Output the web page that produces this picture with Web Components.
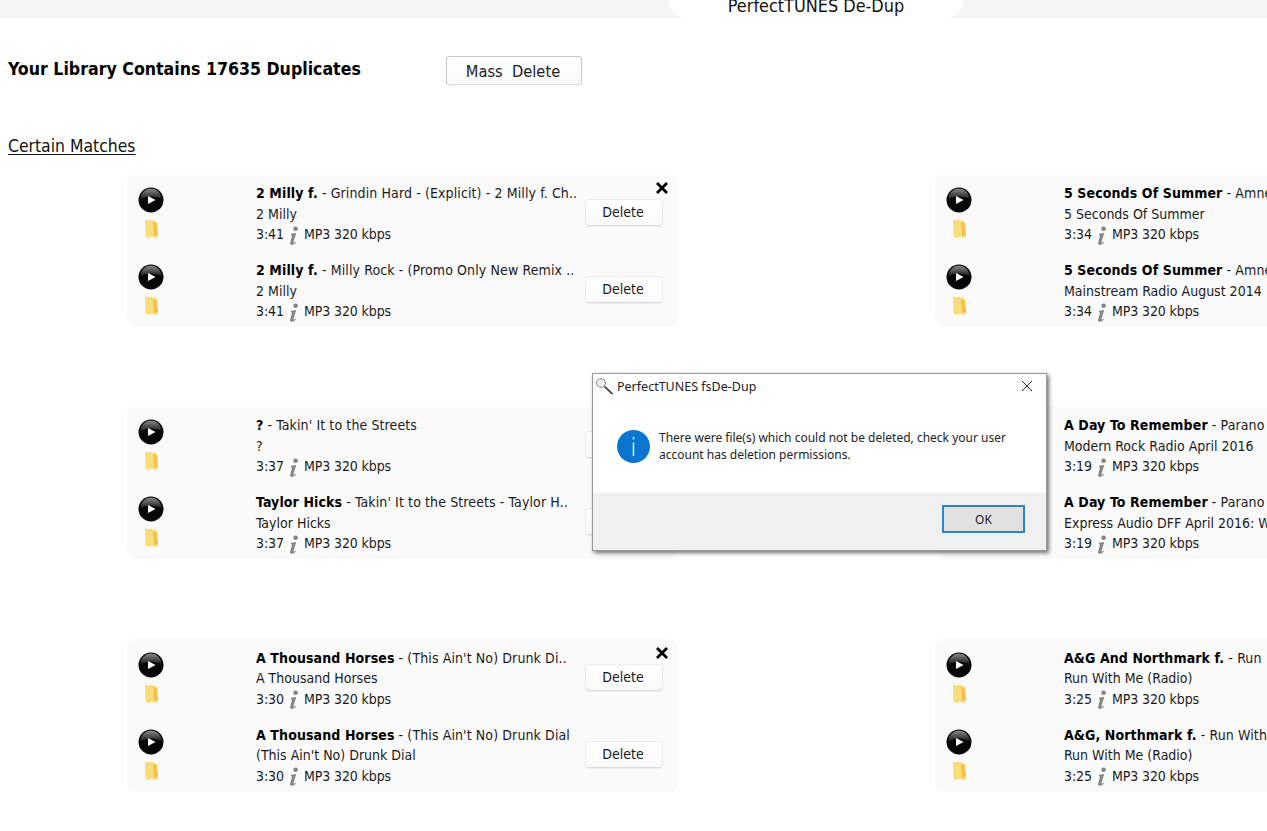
<!DOCTYPE html>
<html>
<head>
<meta charset="utf-8">
<title>PerfectTUNES De-Dup</title>
<style>
  html, body {
    margin: 0;
    height: 100%;
    overflow: hidden;
    background: #fff;
    color: #111;
    font-family: "DejaVu Sans Condensed", "DejaVu Sans", sans-serif;
    font-stretch: condensed;
  }
</style>
</head>
<body>

<dd-tabbar>PerfectTUNES De-Dup</dd-tabbar>

<dd-summary>
  <span slot="title">Your Library Contains 17635 Duplicates</span>
  <dd-button slot="action" wide>Mass&nbsp; Delete</dd-button>
</dd-summary>

<dd-section heading="Certain Matches">
  <dd-match closable>
    <dd-track><b>2 Milly f.</b> - Grindin Hard - (Explicit) - 2 Milly f. Ch..<span slot="album">2 Milly</span><span slot="time">3:41</span></dd-track>
    <dd-track><b>2 Milly f.</b> - Milly Rock - (Promo Only New Remix ..<span slot="album">2 Milly</span><span slot="time">3:41</span></dd-track>
  </dd-match>
  <dd-match closable>
    <dd-track><b>5 Seconds Of Summer</b> - Amne<span slot="album">5 Seconds Of Summer</span><span slot="time">3:34</span></dd-track>
    <dd-track><b>5 Seconds Of Summer</b> - Amne<span slot="album">Mainstream Radio August 2014</span><span slot="time">3:34</span></dd-track>
  </dd-match>
  <dd-match closable>
    <dd-track><b>?</b> - Takin' It to the Streets<span slot="album">?</span><span slot="time">3:37</span></dd-track>
    <dd-track><b>Taylor Hicks</b> - Takin' It to the Streets - Taylor H..<span slot="album">Taylor Hicks</span><span slot="time">3:37</span></dd-track>
  </dd-match>
  <dd-match closable>
    <dd-track><b>A Day To Remember</b> - Parano<span slot="album">Modern Rock Radio April 2016</span><span slot="time">3:19</span></dd-track>
    <dd-track><b>A Day To Remember</b> - Parano<span slot="album">Express Audio DFF April 2016: W</span><span slot="time">3:19</span></dd-track>
  </dd-match>
  <dd-match closable>
    <dd-track><b>A Thousand Horses</b> - (This Ain't No) Drunk Di..<span slot="album">A Thousand Horses</span><span slot="time">3:30</span></dd-track>
    <dd-track><b>A Thousand Horses</b> - (This Ain't No) Drunk Dial<span slot="album">(This Ain't No) Drunk Dial</span><span slot="time">3:30</span></dd-track>
  </dd-match>
  <dd-match closable>
    <dd-track><b>A&amp;G And Northmark f.</b> - Run<span slot="album">Run With Me (Radio)</span><span slot="time">3:25</span></dd-track>
    <dd-track><b>A&amp;G, Northmark f.</b> - Run With<span slot="album">Run With Me (Radio)</span><span slot="time">3:25</span></dd-track>
  </dd-match>
</dd-section>

<dd-dialog heading="PerfectTUNES fsDe-Dup">There were file(s) which could not be deleted, check your user account has deletion permissions.</dd-dialog>

<script>
class DdTabbar extends HTMLElement {
  constructor() {
    super();
    const shadowRoot = this.attachShadow({mode: 'open'});
    shadowRoot.innerHTML = `
      <style>
        :host {
          display: flex;
          justify-content: flex-end;
          height: 18px;
          padding-right: 304px;
          background: #f5f5f5;
          overflow: hidden;
        }
        .tab {
          width: 294px;
          height: 18px;
          box-sizing: border-box;
          background: #fff;
          border-radius: 0 0 18px 18px;
          text-align: center;
          font-size: 17.9px;
          line-height: 12px;
        }
      </style>
      <div class="tab"><slot></slot></div>
    `;
  }
}
customElements.define('dd-tabbar', DdTabbar);

class DdButton extends HTMLElement {
  constructor() {
    super();
    const shadowRoot = this.attachShadow({mode: 'open'});
    shadowRoot.innerHTML = `
      <style>
        :host {
          display: flex;
          align-items: center;
          justify-content: center;
          box-sizing: border-box;
          width: 78px;
          height: 27px;
          padding-right: 2px;
          border: 1px solid #ececec;
          border-bottom-color: #dcdcdc;
          border-radius: 4px;
          background: linear-gradient(#fff, #fafafa);
          box-shadow: 0 1px 1px rgba(0, 0, 0, .05);
          font-size: 14px;
          color: #1a1a1a;
          white-space: nowrap;
        }
        :host([wide]) {
          width: 136px;
          height: 29px;
          border-color: #c8c8c8;
          border-bottom-color: #dedede;
          font-size: 16.3px;
          padding-top: 2px;
        }
      </style>
      <slot></slot>
    `;
  }
}
customElements.define('dd-button', DdButton);

class DdSummary extends HTMLElement {
  constructor() {
    super();
    const shadowRoot = this.attachShadow({mode: 'open'});
    shadowRoot.innerHTML = `
      <style>
        :host {
          display: grid;
          grid-template-columns: 438px auto;
          justify-content: start;
          align-items: start;
          padding: 38px 0 0 8px;
        }
        .title {
          font-size: 17.6px;
          font-weight: 700;
          line-height: 26px;
          color: #000;
          white-space: nowrap;
        }
      </style>
      <div class="title"><slot name="title"></slot></div>
      <slot name="action"></slot>
    `;
  }
}
customElements.define('dd-summary', DdSummary);

class DdSection extends HTMLElement {
  constructor() {
    super();
    const shadowRoot = this.attachShadow({mode: 'open'});
    shadowRoot.innerHTML = `
      <style>
        :host { display: block; }
        h2 {
          margin: 49px 0 16px 8px;
          font-size: 17.4px;
          font-weight: 400;
          line-height: 24px;
          text-decoration: underline;
          text-underline-offset: 2px;
        }
        .grid {
          display: grid;
          grid-template-columns: 551px 551px;
          column-gap: 257px;
          row-gap: 79.3px;
          padding-left: 127px;
        }
      </style>
      <h2></h2>
      <div class="grid"><slot></slot></div>
    `;
    shadowRoot.querySelector('h2').textContent = this.getAttribute('heading');
  }
}
customElements.define('dd-section', DdSection);

class DdMatch extends HTMLElement {
  constructor() {
    super();
    const shadowRoot = this.attachShadow({mode: 'open'});
    shadowRoot.innerHTML = `
      <style>
        :host {
          display: block;
          position: relative;
          height: 153px;
          background: #fafafa;
          border-radius: 9px;
        }
        svg {
          position: absolute;
          right: 10px;
          top: 8px;
          width: 12px;
          height: 12px;
        }
      </style>
      <slot></slot>
      <svg viewBox="0 0 12 12"><path d="M1 1 L11 11 M11 1 L1 11" stroke="#000" stroke-width="2.8" fill="none"/></svg>
    `;
  }
}
customElements.define('dd-match', DdMatch);

class DdTrack extends HTMLElement {
  constructor() {
    super();
    const shadowRoot = this.attachShadow({mode: 'open'});
    shadowRoot.innerHTML = `
      <style>
        :host {
          display: grid;
          grid-template-columns: 129px 329px 78px;
          height: 77px;
          box-sizing: border-box;
          font-size: 14px;
          line-height: 20.5px;
          color: #1a1a1a;
        }
        .icons {
          display: flex;
          flex-direction: column;
          align-items: flex-start;
          gap: 6px;
          padding: 13px 0 0 11px;
        }
        .folder { margin-left: 6px; filter: blur(.5px); }
        .text {
          padding-top: 9px;
          white-space: nowrap;
        }
        .text div { height: 20.5px; }
        .text .line { letter-spacing: .11px; }
        .meta {
          display: flex;
          align-items: center;
          letter-spacing: -.1px;
        }
        .meta svg { margin: 3px 5px 0 4px; }
        .action { padding-top: 25px; }
        ::slotted(b) { color: #000; }
      </style>
      <div class="icons">
        <svg width="26" height="26" viewBox="0 0 26 26">
          <defs>
            <linearGradient id="gloss" x1="0" y1="0" x2="0" y2="1">
              <stop offset="0" stop-color="#8a8a8a"/>
              <stop offset="1" stop-color="#1c1c1c"/>
            </linearGradient>
          </defs>
          <circle cx="13" cy="13" r="12.5" fill="#060606"/>
          <path d="M2.5 12 A10.5 10.5 0 0 1 23.5 12 C17 8.5 9 8.5 2.5 12 Z" fill="url(#gloss)"/>
          <path d="M10 9 L17.5 13 L10 17 Z" fill="#fff"/>
        </svg>
        <svg class="folder" width="15" height="20" viewBox="0 0 15 20">
          <path d="M1 1 L8 1 L13 3 L14 16 L13.5 19 L8 18 L3 19 L1.5 17 Z" fill="#f9dc7c"/>
          <path d="M9 3 L13 4 L14 16 L10 17 Z" fill="#f2c349"/>
        </svg>
      </div>
      <div class="text">
        <div class="line"><slot></slot></div>
        <div><slot name="album"></slot></div>
        <div class="meta">
          <slot name="time"></slot>
          <svg width="11" height="20" viewBox="0 0 10 19">
            <circle cx="7" cy="2.6" r="2.2" fill="#858585"/>
            <path d="M2.8 7.4 L7.6 6.6 L5 15 C4.7 16.2 5.4 16.2 6.8 15 L7.2 15.6 C5.3 18 1.4 18.8 1.8 15.8 L3.6 9.2 L2.6 8.6 Z" fill="#858585"/>
          </svg>
          MP3 320 kbps
        </div>
      </div>
      <div class="action"><dd-button>Delete</dd-button></div>
    `;
  }
}
customElements.define('dd-track', DdTrack);

class DdDialog extends HTMLElement {
  constructor() {
    super();
    const shadowRoot = this.attachShadow({mode: 'open'});
    shadowRoot.innerHTML = `
      <style>
        :host {
          position: absolute;
          left: 592px;
          top: 373px;
          width: 455px;
          height: 178px;
          box-sizing: border-box;
          display: flex;
          flex-direction: column;
          background: #fff;
          border: 1px solid #9a9a9a;
          box-shadow: 2px 2px 4px rgba(0, 0, 0, .55);
          font-family: "Noto Sans", "Open Sans", sans-serif;
          font-stretch: normal;
          color: #222;
        }
        header {
          display: flex;
          align-items: center;
          height: 24px;
          padding: 0 13px 0 2px;
          font-size: 12.5px;
        }
        header span { flex: 1; margin-left: 3px; }
        .body {
          flex: 1;
          display: flex;
          align-items: center;
          gap: 9px;
          padding: 1px 20px 0 24px;
          font-size: 12px;
          line-height: 17px;
        }
        footer {
          display: flex;
          justify-content: flex-end;
          height: 57px;
          box-sizing: border-box;
          padding: 12px 21px 0 0;
          background: #f0f0f0;
        }
        .ok {
          width: 83px;
          height: 28px;
          box-sizing: border-box;
          border: 2px solid #2a84cc;
          background: #e1e1e1;
          display: flex;
          align-items: center;
          justify-content: center;
          font-size: 12px;
        }
      </style>
      <header>
        <svg width="19" height="19" viewBox="0 0 19 19">
          <circle cx="6" cy="6" r="4.4" fill="#eee" stroke="#888"/>
          <path d="M9.5 9.5 L17.5 17" stroke="#222" stroke-width="1.6"/>
        </svg>
        <span></span>
        <svg width="12" height="12" viewBox="0 0 12 12"><path d="M1 1 L11 11 M11 1 L1 11" stroke="#333" stroke-width="1" fill="none"/></svg>
      </header>
      <div class="body">
        <svg width="33" height="33" viewBox="0 0 33 33" style="flex:none">
          <circle cx="16.5" cy="16.5" r="16.5" fill="#0b76cf"/>
          <path d="M16.5 7 V9.5 M16.5 12.5 V26" stroke="#fff" stroke-width="1.4"/>
        </svg>
        <div><slot></slot></div>
      </div>
      <footer><div class="ok">OK</div></footer>
    `;
    shadowRoot.querySelector('header span').textContent = this.getAttribute('heading');
  }
}
customElements.define('dd-dialog', DdDialog);
</script>
</body>
</html>
